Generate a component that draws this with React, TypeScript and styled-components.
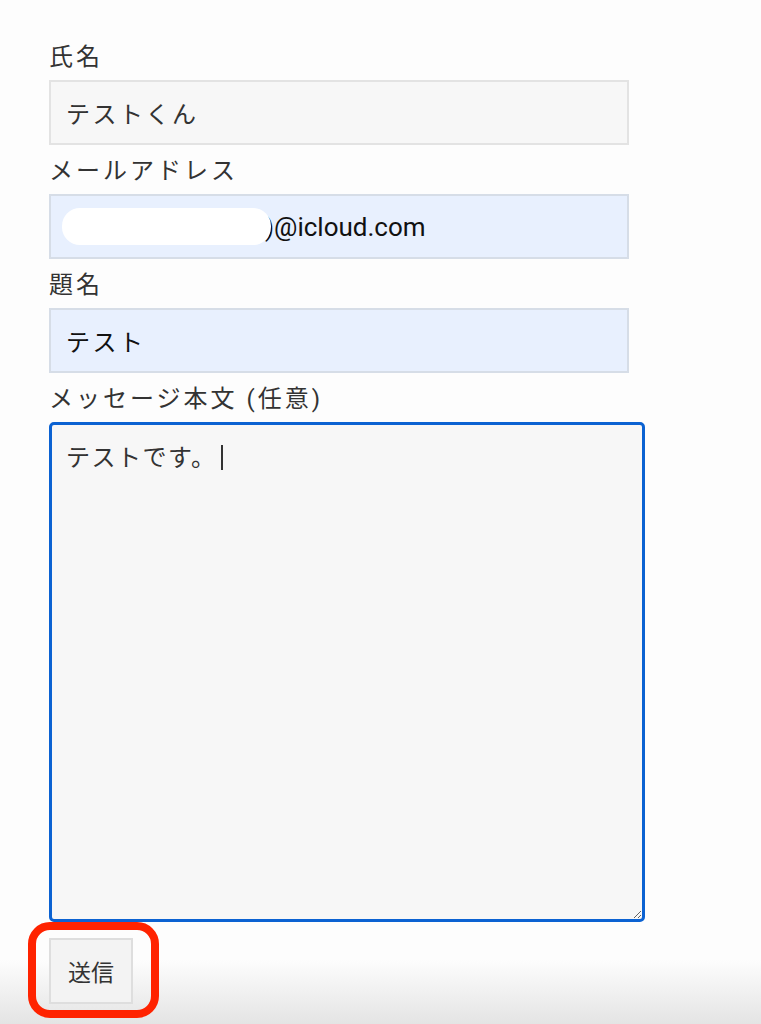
import * as React from "react";
import styled, { createGlobalStyle } from "styled-components";

const GlobalStyle = createGlobalStyle`
  html {
    min-height: 1024px;
    background: linear-gradient(to bottom, #fdfdfd 0, #fdfdfd 960px, #e4e4e4 1024px);
  }
  body {
    margin: 0;
    font-family: Roboto, "Noto Sans CJK JP", sans-serif;
    color: #333;
  }
`;

const Form = styled.form`
  display: flex;
  flex-direction: column;
  padding: 31px 0 24px 49px;
`;

const Field = styled.div<{ $wide?: boolean }>`
  display: flex;
  flex-direction: column;
  width: ${({ $wide }) => ($wide ? "596px" : "580px")};
`;

const Label = styled.label`
  display: block;
  padding-top: 8px;
  margin-bottom: 5px;
  line-height: 36px;
  font-size: 24px;
  letter-spacing: 3px;
  color: #333;
`;

const Input = styled.div<{ $filled?: boolean }>`
  box-sizing: border-box;
  height: 65px;
  display: flex;
  align-items: center;
  padding: 0 15px;
  font-size: 24px;
  letter-spacing: 2.5px;
  background: ${({ $filled }) => ($filled ? "#e8f0fe" : "#f7f7f7")};
  border: 2px solid ${({ $filled }) => ($filled ? "#d6dde7" : "#e3e3e3")};
  color: ${({ $filled }) => ($filled ? "#111" : "#333")};
`;

const Email = styled.span`
  margin-left: -6px;
  font-family: Roboto, sans-serif;
  font-size: 26px;
  letter-spacing: 0;
  color: #111;
`;

const Masked = styled.span`
  position: relative;
  z-index: 1;
  display: inline-block;
  flex: none;
  width: 209px;
  height: 37px;
  margin-left: -4px;
  border-radius: 18px;
  background: #fff;
`;

const AreaWrap = styled.div`
  position: relative;
  display: flex;
  flex-direction: column;
`;

const TextArea = styled.textarea`
  box-sizing: border-box;
  height: 500px;
  padding: 14px 15px;
  font-family: Roboto, "Noto Sans CJK JP", sans-serif;
  font-size: 24px;
  color: #333;
  background: #f7f7f7;
  border: 3px solid #0b62d2;
  border-radius: 5px;
  outline: none;
  resize: both;
`;

const TextLine = styled.div`
  position: absolute;
  left: 17px;
  top: 16px;
  font-size: 24px;
  letter-spacing: 1.5px;
  color: #333;
  pointer-events: none;
`;

const Caret = styled.span`
  display: inline-block;
  width: 2px;
  height: 25px;
  margin-left: 4px;
  background: #333;
  vertical-align: -4px;
`;

const ButtonRow = styled.div`
  margin-top: 16px;
  display: flex;
`;

const Highlight = styled.div`
  position: relative;
  &::after {
    content: "";
    position: absolute;
    left: -21px;
    right: -26px;
    top: -16px;
    bottom: -14px;
    border: 8px solid #ff2300;
    border-radius: 22px;
    pointer-events: none;
  }
`;

const Button = styled.button`
  box-sizing: border-box;
  width: 84px;
  height: 66px;
  font-family: "Noto Sans CJK JP", sans-serif;
  font-size: 23px;
  color: #333;
  background: #f3f3f3;
  border: 2px solid #dedede;
  padding: 0;
`;

export default function App() {
  return (
    <>
      <GlobalStyle />
      <Form onSubmit={(e) => e.preventDefault()}>
        <Field>
          <Label>氏名</Label>
          <Input>テストくん</Input>
        </Field>
        <Field>
          <Label>メールアドレス</Label>
          <Input $filled>
            <Masked />
            <Email>)@icloud.com</Email>
          </Input>
        </Field>
        <Field>
          <Label>題名</Label>
          <Input $filled>テスト</Input>
        </Field>
        <Field $wide>
          <Label>メッセージ本文 (任意)</Label>
          <AreaWrap>
            <TextArea defaultValue="" aria-label="メッセージ本文" />
            <TextLine>
              テストです。
              <Caret />
            </TextLine>
          </AreaWrap>
        </Field>
        <ButtonRow>
          <Highlight>
            <Button type="submit">送信</Button>
          </Highlight>
        </ButtonRow>
      </Form>
    </>
  );
}
